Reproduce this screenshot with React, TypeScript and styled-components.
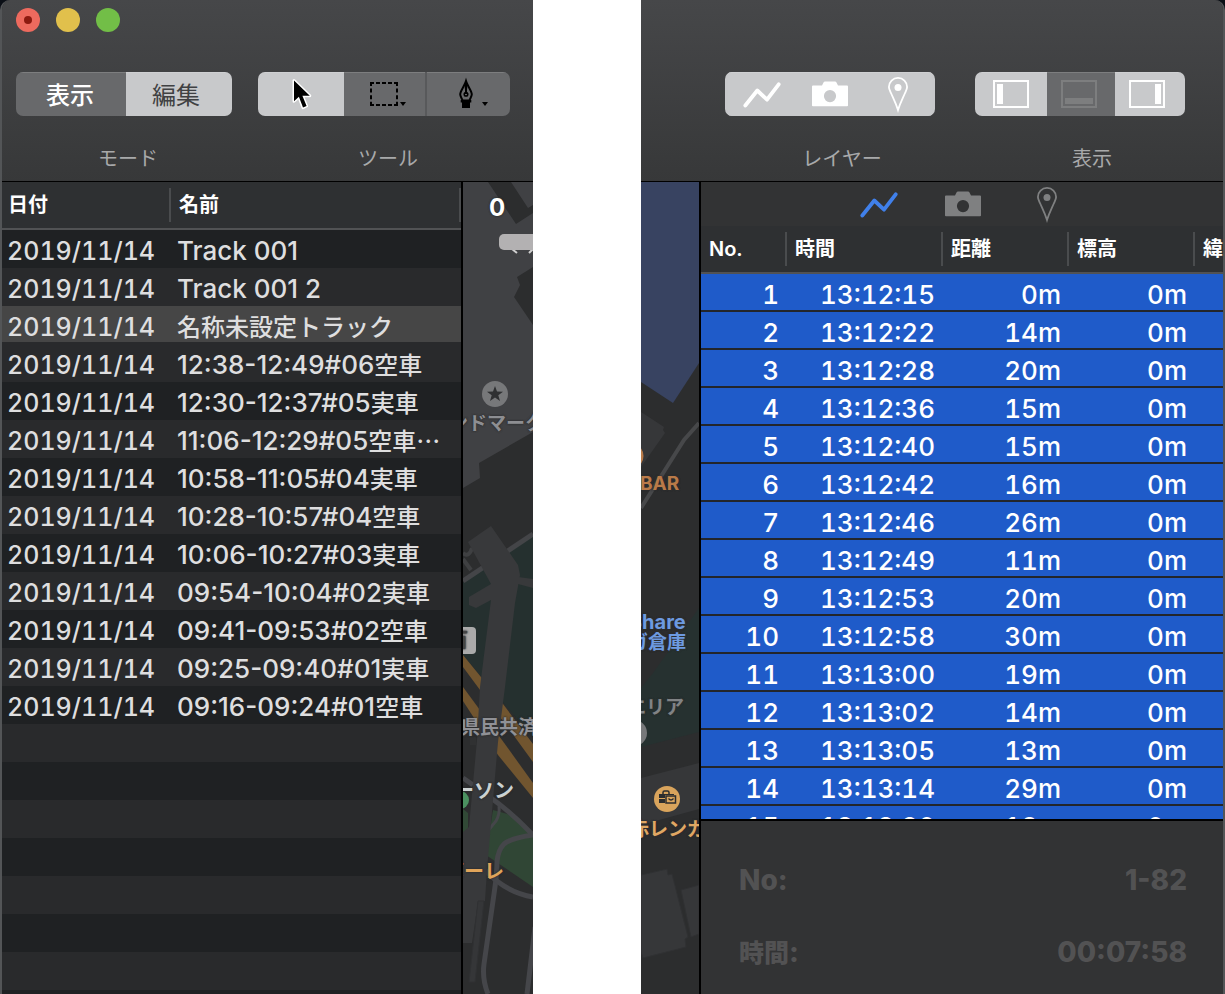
import React from "react";
import styled, { createGlobalStyle, css } from "styled-components";

const GlobalStyle = createGlobalStyle`
  *, *::before, *::after { box-sizing: border-box; }
  body {
    margin: 0;
    background: #fff;
    font-family: Inter, "Noto Sans CJK JP", sans-serif;
    -webkit-font-smoothing: antialiased;
  }
  button { font: inherit; border: 0; padding: 0; margin: 0; background: none; color: inherit; }
`;

/* ---------- window frame ---------- */

const Page = styled.main`
  display: grid;
  grid-template-columns: minmax(0, 533fr) minmax(0, 584fr);
  column-gap: 108px;
  height: 100vh;
`;

const Backdrop = styled.div`
  min-width: 0;
  min-height: 0;
  background: linear-gradient(#0b0f16 0 20px, #fff 20px);
`;

const WindowPart = styled.section<{ $edge: "left" | "right" }>`
  display: flex;
  flex-direction: column;
  height: 100%;
  overflow: hidden;
  background: #2c2d2e;
  ${(p) =>
    p.$edge === "left"
      ? css`border-left: 2px solid #535557; border-top-left-radius: 10px;`
      : css`border-right: 2px solid #535557; border-top-right-radius: 10px;`}
`;

const TitleBar = styled.header`
  flex: none;
  display: flex;
  flex-direction: column;
  height: 182px;
  border-bottom: 1px solid #000;
  background: linear-gradient(#464749, #373839);
`;

const Lights = styled.div`
  display: flex;
  gap: 16px;
  height: 72px;
  padding: 8px 14px 0;
`;

const Light = styled.button<{ $color: string }>`
  display: grid;
  place-items: center;
  width: 24px;
  height: 24px;
  border-radius: 50%;
  background: ${(p) => p.$color};
`;

const LightDot = styled.span`
  width: 8px;
  height: 8px;
  border-radius: 50%;
  background: #8c1a10;
`;

const Tools = styled.div<{ $end?: boolean }>`
  display: flex;
  gap: ${(p) => (p.$end ? 16 : 18)}px;
  justify-content: ${(p) => (p.$end ? "flex-end" : "flex-start")};
  padding: 0 14px;
`;

const ToolItem = styled.div<{ $trail: number }>`
  display: flex;
  flex-direction: column;
  align-items: flex-start;
  gap: 29px;
  padding-right: ${(p) => p.$trail}px;
`;

const ToolLabel = styled.span<{ $trail: number }>`
  align-self: center;
  margin-right: -${(p) => p.$trail}px;
  font-size: 20px;
  line-height: 28px;
  color: #a8a9aa;
`;

const Segments = styled.div<{ $pad?: boolean }>`
  display: flex;
  height: 44px;
  border-radius: 7px;
  overflow: hidden;
  background: ${(p) => (p.$pad ? "#c7c8ca" : "transparent")};
  padding: 0 ${(p) => (p.$pad ? 3 : 0)}px;
`;

const Segment = styled.button<{ $w: number; $on?: boolean; $inset?: number; $rule?: boolean }>`
  display: flex;
  align-items: center;
  justify-content: ${(p) => (p.$inset ? "flex-start" : "center")};
  padding-left: ${(p) => p.$inset ?? 0}px;
  width: ${(p) => p.$w}px;
  height: 44px;
  font-size: 24px;
  line-height: 28px;
  background: ${(p) => (p.$on ? "#c8c9cb" : "#68696b")};
  color: ${(p) => (p.$on ? "#404143" : "#fff")};
  font-weight: ${(p) => (p.$on ? 400 : 500)};
  border-left: ${(p) => (p.$rule ? "2px solid #58595b" : "0")};
  box-shadow: inset 0 1px 0 rgba(255, 255, 255, 0.14);
`;

const SegmentText = styled.span`
  padding-top: 3px;
`;

const SegmentIcon = styled.span`
  display: flex;
  padding-top: 2px;
  color: #fff;
`;

const Body = styled.div`
  flex: 1;
  display: flex;
  min-height: 0;
`;

/* ---------- tables ---------- */

const headRule = css`
  background-image: linear-gradient(#4a4c4e, #4a4c4e);
  background-repeat: no-repeat;
  background-size: 2px 34px;
  background-position: right 6px;
`;

const Th = styled.th<{ $plain?: boolean; $edge?: boolean }>`
  height: 48px;
  padding: 0 0 0 ${(p) => (p.$edge ? 6 : 8)}px;
  border-bottom: 2px solid #515254;
  overflow: hidden;
  white-space: nowrap;
  text-align: left;
  font-size: 20px;
  line-height: 28px;
  font-weight: 600;
  color: #fff;
  ${(p) => !p.$plain && headRule}
`;

const Sidebar = styled.aside`
  flex: 1;
  min-width: 0;
  overflow: hidden;
  border-right: 2px solid #000;
  background: repeating-linear-gradient(#1f2123 0 38px, #292a2c 38px 76px) 0 48px;
`;

const Table = styled.table`
  width: 100%;
  table-layout: fixed;
  border-collapse: separate;
  border-spacing: 0;
`;

const Head = styled.thead`
  background: #2e3032;
`;

const TrackRow = styled.tr<{ $selected?: boolean }>`
  background: ${(p) => (p.$selected ? "#464646" : "transparent")};
  td { border-bottom: ${(p) => (p.$selected ? "2px solid #292a2c" : "0")}; }
`;

const TrackCell = styled.td<{ $date?: boolean }>`
  height: 38px;
  padding: ${(p) => (p.$date ? "6px 0 0 5px" : "5px 0 0 6px")};
  overflow: hidden;
  white-space: nowrap;
  font-size: ${(p) => (p.$date ? 25 : 26)}px;
  line-height: ${(p) => (p.$date ? 30 : 31)}px;
  font-weight: 500;
  vertical-align: top;
  color: #dededf;
  font-variant-numeric: ${(p) => (p.$date ? "tabular-nums" : "normal")};
`;

const Kanji = styled.span<{ $size: number }>`
  font-family: "Noto Sans CJK JP", sans-serif;
  font-size: ${(p) => p.$size}px;
  line-height: 1;
`;

const Col = styled.col<{ $w?: number }>`
  width: ${(p) => (p.$w ? `${p.$w}px` : "auto")};
`;

const Panel = styled.section`
  flex: 1;
  min-width: 0;
  display: flex;
  flex-direction: column;
  border-left: 2px solid #000;
  background: #323334;
`;

const Tabs = styled.nav`
  flex: none;
  display: flex;
  justify-content: center;
  height: 44px;
  padding: 2px 0 0 2px;
`;

const Tab = styled.button<{ $color: string }>`
  display: grid;
  place-items: center;
  width: 84px;
  height: 42px;
  color: ${(p) => p.$color};
`;

const PointList = styled.div`
  flex: 1;
  min-height: 0;
  overflow: hidden;
  border-bottom: 2px solid #000;
`;

const PointCell = styled.td`
  height: 38px;
  padding: 5px 8px 0 0;
  border-bottom: 2px solid #23262b;
  background: #1f5bc9;
  color: #fff;
  font-size: 26px;
  line-height: 31px;
  font-weight: 500;
  text-align: right;
  vertical-align: top;
  white-space: nowrap;
  font-variant-numeric: tabular-nums;
`;

const Details = styled.dl`
  flex: none;
  display: flex;
  flex-direction: column;
  gap: 36px;
  margin: 0;
  padding: 41px 36px 24px 38px;
  font-size: 28px;
  line-height: 36px;
  font-weight: 800;
  color: #525253;
`;

const DetailRow = styled.div`
  display: flex;
  justify-content: space-between;
  height: 36px;
  dt, dd { margin: 0; }
`;

/* ---------- map ---------- */

const MapView = styled.div<{ $w: number }>`
  position: relative;
  flex: none;
  width: ${(p) => p.$w}px;
  overflow: hidden;
  background: #2c2d2e;
`;

const MapDrawing = styled.svg`
  position: absolute;
  left: 0;
  top: 0;
`;

const MapLabel = styled.span<{ $x: number; $y: number; $color: string; $size?: number }>`
  position: absolute;
  left: ${(p) => p.$x}px;
  top: ${(p) => p.$y - 10}px;
  white-space: nowrap;
  font-size: ${(p) => p.$size ?? 19}px;
  line-height: 20px;
  font-weight: 700;
  color: ${(p) => p.$color};
  text-shadow: 0 0 2px #2c2d2e, 0 0 2px #2c2d2e;
`;

/* ---------- icons ---------- */

const ArrowIcon = () => (
  <svg width="86" height="44" viewBox="0 0 86 44">
    <path
      d="M36 8.5V29.2L40.9 24.8L45 35.6L48.6 34L44.4 23.8H51.8Z"
      fill="#000"
      stroke="#fff"
      strokeWidth="3"
      strokeLinejoin="round"
      paintOrder="stroke"
    />
  </svg>
);

const MarqueeIcon = () => (
  <svg width="81" height="44" viewBox="0 0 81 44">
    <path
      d="M26 11H54M26 33H54"
      stroke="#000"
      strokeWidth="2"
      strokeDasharray="4 2"
      fill="none"
    />
    <path d="M27 10V34M53 10V34" stroke="#000" strokeWidth="2" strokeDasharray="4 2.6" fill="none" />
    <path d="M56 30H62L59 34Z" fill="#000" />
  </svg>
);

const PenIcon = () => (
  <svg width="83" height="44" viewBox="2 0 83 44">
    <path
      d="M41 9C39.5 14 35.2 19 35.2 22.3C35.2 24.8 37 26.6 37.6 28.4H44.4C45 26.6 46.8 24.8 46.8 22.3C46.8 19 42.5 14 41 9Z"
      fill="none"
      stroke="#000"
      strokeWidth="2"
    />
    <path d="M41 7.5L39.6 13V14L40.3 20H41.7L42.4 14V13Z" fill="#000" />
    <path d="M41 12V22" stroke="#000" strokeWidth="2" />
    <circle cx="41" cy="22.2" r="1.8" fill="none" stroke="#000" strokeWidth="1.5" />
    <path d="M35.7 28H46.3V30.4H45V36H37V30.4H35.7Z" fill="#000" />
    <path d="M57 30H63L60 34Z" fill="#000" />
  </svg>
);

const TrackIcon = () => (
  <svg width="38" height="26" viewBox="0 0 38 26" fill="none">
    <path
      d="M2.3 23.5L14.3 8.5L24 17.7L35.7 2.3"
      stroke="currentColor"
      strokeWidth="3.8"
      strokeLinecap="round"
      strokeLinejoin="round"
    />
  </svg>
);

const CameraIcon = () => (
  <svg width="36" height="28" viewBox="0 0 36 28">
    <path
      fill="currentColor"
      fillRule="evenodd"
      d="M1 4.4H10L11.5 1.4Q12 .4 13 .4H23Q24 .4 24.5 1.4L26 4.4H35Q36 4.4 36 5.4V24.4Q36 25.2 35 25.2H1Q0 25.2 0 24.4V5.4Q0 4.4 1 4.4ZM18 9A6.1 6.1 0 1 0 18 21.2A6.1 6.1 0 1 0 18 9Z"
    />
  </svg>
);

const PinIcon = () => (
  <svg width="20" height="36" viewBox="0 0 20 36">
    <path
      d="M10 33C8 26.5 5.6 22 3.2 16.5C2 13.8 .9 12.1 .9 10A9.1 9.1 0 0 1 19.1 10C19.1 12.1 18 13.8 16.8 16.5C14.4 22 12 26.5 10 33Z"
      fill="none"
      stroke="currentColor"
      strokeWidth="1.8"
    />
    <circle cx="10" cy="10.5" r="3.5" fill="currentColor" />
  </svg>
);

const PaneIcon = ({ side }: { side: "left" | "bottom" | "right" }) => {
  const bar = {
    left: { x: 4, y: 4, width: 6, height: 20 },
    bottom: { x: 4, y: 18, width: 28, height: 6 },
    right: { x: 26, y: 4, width: 6, height: 20 },
  }[side];
  const color = side === "bottom" ? "#7d7e7f" : "#fff";
  return (
    <svg width="36" height="28" viewBox="0 0 36 28">
      <rect x="1" y="1" width="34" height="26" fill="none" stroke={color} strokeWidth="2" />
      <rect {...bar} fill={color} />
    </svg>
  );
};

/* ---------- data ---------- */

const tracks = [
  "Track 001",
  "Track 001 2",
  "名称未設定トラック",
  "12:38-12:49#06空車",
  "12:30-12:37#05実車",
  "11:06-12:29#05空車⋯",
  "10:58-11:05#04実車",
  "10:28-10:57#04空車",
  "10:06-10:27#03実車",
  "09:54-10:04#02実車",
  "09:41-09:53#02空車",
  "09:25-09:40#01実車",
  "09:16-09:24#01空車",
];

const points: [string, string][] = [
  ["13:12:15", "0m"],
  ["13:12:22", "14m"],
  ["13:12:28", "20m"],
  ["13:12:36", "15m"],
  ["13:12:40", "15m"],
  ["13:12:42", "16m"],
  ["13:12:46", "26m"],
  ["13:12:49", "11m"],
  ["13:12:53", "20m"],
  ["13:12:58", "30m"],
  ["13:13:00", "19m"],
  ["13:13:02", "14m"],
  ["13:13:05", "13m"],
  ["13:13:14", "29m"],
  ["13:13:20", "18m"],
];

const splitScripts = (text: string, size: number) =>
  text
    .split(/([\u22ef\u3040-\u30ff\u4e00-\u9fff]+)/)
    .filter(Boolean)
    .map((run, i) =>
      /[\u22ef\u3040-\u9fff]/.test(run) ? (
        <Kanji key={i} $size={size}>
          {run}
        </Kanji>
      ) : (
        run
      )
    );

/* ---------- sections ---------- */

const LeftMap = () => (
  <MapView $w={70}>
    <MapDrawing width="70" height="812" viewBox="0 0 70 812" fill="none">
      <path d="M0 0H70V250L16 281L17 296L0 306Z" fill="#404144" />
      <path d="M25 0L53 42L70 31V23L65 26L48 0Z" fill="#2c2d2e" />
      <path d="M70 85L54 95L57 103L51 115L70 143Z" fill="#2c2d2e" />
      <path d="M0 400L70 353V556L0 473Z" fill="#25302f" />
      <path d="M0 473L40 522L70 562V580L54 558L0 485Z" fill="#71552f" />
      <path d="M0 505L39 558L70 601V616L35 573L0 519Z" fill="#71552f" />
      <path d="M0 627L5 631V648L0 652Z" fill="#314936" />
      <path d="M30 628L48 633L70 655V705L23 673Z" fill="#304635" />
      <path d="M0 399L70 352" stroke="#444548" strokeWidth="5" />
      <path d="M0 377L8 388M0 371Q6 376 9 366" stroke="#3f4042" strokeWidth="4" />
      <g stroke="#45464a" strokeWidth="5">
        <path d="M0 596L10 603M28 616Q48 630 70 653Q48 656 41 662Q35 668 34 680Q34 692 31 712L21 782Q19 797 25 812" />
        <path d="M22 688Q42 710 70 715M72 745L64 812" />
        <path d="M36 624Q37 632 33 639L24 650" strokeWidth="3" />
      </g>
      <path
        d="M5 360L28 344L55 383L57 393L52 421L42 505L35 560L30 618L24 688L22 719L15 720L9 761H0V650L6 645L14 558L17 505L28 418L13 426L6 423V415L28 402Z"
        fill="#38393b"
      />
      <path d="M15 719H21L12 800H6Z" fill="#353638" stroke="#303133" />
      <path d="M55 395L70 397V406L55 402Z" fill="#38393b" />
      <path d="M7 555V563H13V555Z" fill="#303132" />
      <path d="M49 67L54 71M70 67L66 71" stroke="#d0d0d0" strokeWidth="2" />
      <rect x="36" y="52" width="44" height="16" rx="5" fill="#b3b1b2" />
      <circle cx="32" cy="212" r="13" fill="#77787a" />
      <path
        d="M32 204L34 209.5L40 209.7L35.3 213.2L37 219L32 215.6L27 219L28.7 213.2L24 209.7L30 209.5Z"
        fill="#2f3032"
      />
      <rect x="-14" y="445" width="27" height="27" rx="4" fill="#aaa" />
      <circle cx="-3" cy="618" r="9" fill="#4b9160" />
    </MapDrawing>
    <MapLabel $x={26} $y={26} $size={24} $color="#fff">0</MapLabel>
    <MapLabel $x={-14} $y={242} $color="#8d8e92">ンドマーク</MapLabel>
    <MapLabel $x={-14} $y={459} $color="#444">百</MapLabel>
    <MapLabel $x={-2} $y={546} $color="#909196">県民共済</MapLabel>
    <MapLabel $x={-9} $y={609} $size={20} $color="#cbd2d2">ーソン</MapLabel>
    <MapLabel $x={-19} $y={690} $size={20} $color="#e0a45a">ボーレ</MapLabel>
  </MapView>
);

const RightMap = () => (
  <MapView $w={58}>
    <MapDrawing width="58" height="812" viewBox="0 0 58 812" fill="none">
      <path d="M0 0H58V181L32 221L0 200Z" fill="#384361" />
      <path d="M0 230L23 245L22 248L24 251L0 285Z" fill="#363739" />
      <path d="M58 241L43 258L0 326" stroke="#47484a" strokeWidth="4" />
      <circle cx="-11" cy="274" r="12" stroke="#b97a48" strokeWidth="3" />
      <path d="M58 426L12 491L0 506V565L58 550Z" fill="#263130" />
      <circle cx="-7" cy="551" r="13" fill="#77787a" />
      <path d="M0 596L58 581V627L0 643Z" fill="#363739" />
      <path d="M0 693L26 687L27 693L31 692L47 755L44 757L45 765L2 776L0 770Z" fill="#363739" stroke="#303133" />
      <path d="M40 708L58 703V752L50 755Z" fill="#363739" stroke="#303133" />
      <circle cx="26" cy="617" r="13" fill="#d9a45c" />
      <path d="M22 613V610.5Q22 609 23.5 609H26.5Q28 609 28 610.5V613" stroke="#2c2d2e" strokeWidth="1.5" />
      <path d="M18 612H33V613H24V621H18Z" fill="#2c2d2e" />
      <path d="M18 616.5H24" stroke="#d9a45c" />
      <rect x="25" y="614" width="9.5" height="7" stroke="#2c2d2e" strokeWidth="1.5" />
      <path d="M27.5 616.5Q30 619.5 32.5 616.5" stroke="#2c2d2e" strokeWidth="1.3" />
    </MapDrawing>
    <MapLabel $x={-1} $y={302} $color="#b97a48">BAR</MapLabel>
    <MapLabel $x={-12} $y={440} $color="#6d9ae0" $size={20}>Share</MapLabel>
    <MapLabel $x={-12} $y={461} $color="#6d9ae0">ガ倉庫</MapLabel>
    <MapLabel $x={-14} $y={526} $color="#808385">エリア</MapLabel>
    <MapLabel $x={-11} $y={648} $color="#e0a763">赤レンガ</MapLabel>
  </MapView>
);

const LeftWindow = () => (
  <Backdrop>
    <WindowPart $edge="left">
      <TitleBar>
        <Lights>
          <Light $color="#ed6a5e" aria-label="閉じる">
            <LightDot />
          </Light>
          <Light $color="#e1c04c" aria-label="しまう" />
          <Light $color="#72be47" aria-label="拡大" />
        </Lights>
        <Tools>
          <ToolItem $trail={8}>
            <Segments role="group" aria-label="モード">
              <Segment $w={110} $inset={30}><SegmentText>表示</SegmentText></Segment>
              <Segment $w={106} $inset={26} $on><SegmentText>編集</SegmentText></Segment>
            </Segments>
            <ToolLabel $trail={8}>モード</ToolLabel>
          </ToolItem>
          <ToolItem $trail={8}>
            <Segments role="group" aria-label="ツール">
              <Segment $w={86} $on aria-label="選択"><ArrowIcon /></Segment>
              <Segment $w={81} aria-label="範囲"><MarqueeIcon /></Segment>
              <Segment $w={85} $rule aria-label="ペン"><PenIcon /></Segment>
            </Segments>
            <ToolLabel $trail={8}>ツール</ToolLabel>
          </ToolItem>
        </Tools>
      </TitleBar>
      <Body>
        <Sidebar>
          <Table>
            <colgroup>
              <Col $w={169} />
              <Col />
            </colgroup>
            <Head>
              <tr>
                <Th $edge>日付</Th>
                <Th>名前</Th>
              </tr>
            </Head>
            <tbody>
              {tracks.map((name, i) => (
                <TrackRow key={name} $selected={i === 2}>
                  <TrackCell $date>2019/11/14</TrackCell>
                  <TrackCell>{splitScripts(name, 24)}</TrackCell>
                </TrackRow>
              ))}
            </tbody>
          </Table>
        </Sidebar>
        <LeftMap />
      </Body>
    </WindowPart>
  </Backdrop>
);

const RightWindow = () => (
  <Backdrop>
    <WindowPart $edge="right">
      <TitleBar>
        <Lights />
        <Tools $end>
          <ToolItem $trail={24}>
            <Segments $pad role="group" aria-label="レイヤー">
              <Segment $w={68} $on aria-label="トラック"><SegmentIcon><TrackIcon /></SegmentIcon></Segment>
              <Segment $w={68} $on aria-label="写真"><SegmentIcon><CameraIcon /></SegmentIcon></Segment>
              <Segment $w={68} $on aria-label="ピン"><SegmentIcon><PinIcon /></SegmentIcon></Segment>
            </Segments>
            <ToolLabel $trail={24}>レイヤー</ToolLabel>
          </ToolItem>
          <ToolItem $trail={24}>
            <Segments role="group" aria-label="表示">
              <Segment $w={72} $on $inset={18} aria-label="左パネル"><PaneIcon side="left" /></Segment>
              <Segment $w={68} $inset={14} aria-label="下パネル"><PaneIcon side="bottom" /></Segment>
              <Segment $w={70} $on $inset={14} aria-label="右パネル"><PaneIcon side="right" /></Segment>
            </Segments>
            <ToolLabel $trail={24}>表示</ToolLabel>
          </ToolItem>
        </Tools>
      </TitleBar>
      <Body>
        <RightMap />
        <Panel>
          <Tabs>
            <Tab $color="#4080ea" aria-label="トラック"><TrackIcon /></Tab>
            <Tab $color="#7f8081" aria-label="写真"><CameraIcon /></Tab>
            <Tab $color="#7f8081" aria-label="ピン"><PinIcon /></Tab>
          </Tabs>
          <PointList>
            <Table>
              <colgroup>
                <Col $w={86} />
                <Col $w={156} />
                <Col $w={126} />
                <Col $w={126} />
                <Col />
              </colgroup>
              <Head>
                <tr>
                  <Th>No.</Th>
                  <Th>時間</Th>
                  <Th>距離</Th>
                  <Th>標高</Th>
                  <Th $plain>緯度</Th>
                </tr>
              </Head>
              <tbody>
                {points.map(([time, dist], i) => (
                  <tr key={time}>
                    <PointCell>{i + 1}</PointCell>
                    <PointCell>{time}</PointCell>
                    <PointCell>{dist}</PointCell>
                    <PointCell>0m</PointCell>
                    <PointCell />
                  </tr>
                ))}
              </tbody>
            </Table>
          </PointList>
          <Details>
            <DetailRow>
              <dt>No:</dt>
              <dd>1-82</dd>
            </DetailRow>
            <DetailRow>
              <dt>{splitScripts("時間:", 25)}</dt>
              <dd>00:07:58</dd>
            </DetailRow>
          </Details>
        </Panel>
      </Body>
    </WindowPart>
  </Backdrop>
);

export default function App() {
  return (
    <>
      <GlobalStyle />
      <Page>
        <LeftWindow />
        <RightWindow />
      </Page>
    </>
  );
}
